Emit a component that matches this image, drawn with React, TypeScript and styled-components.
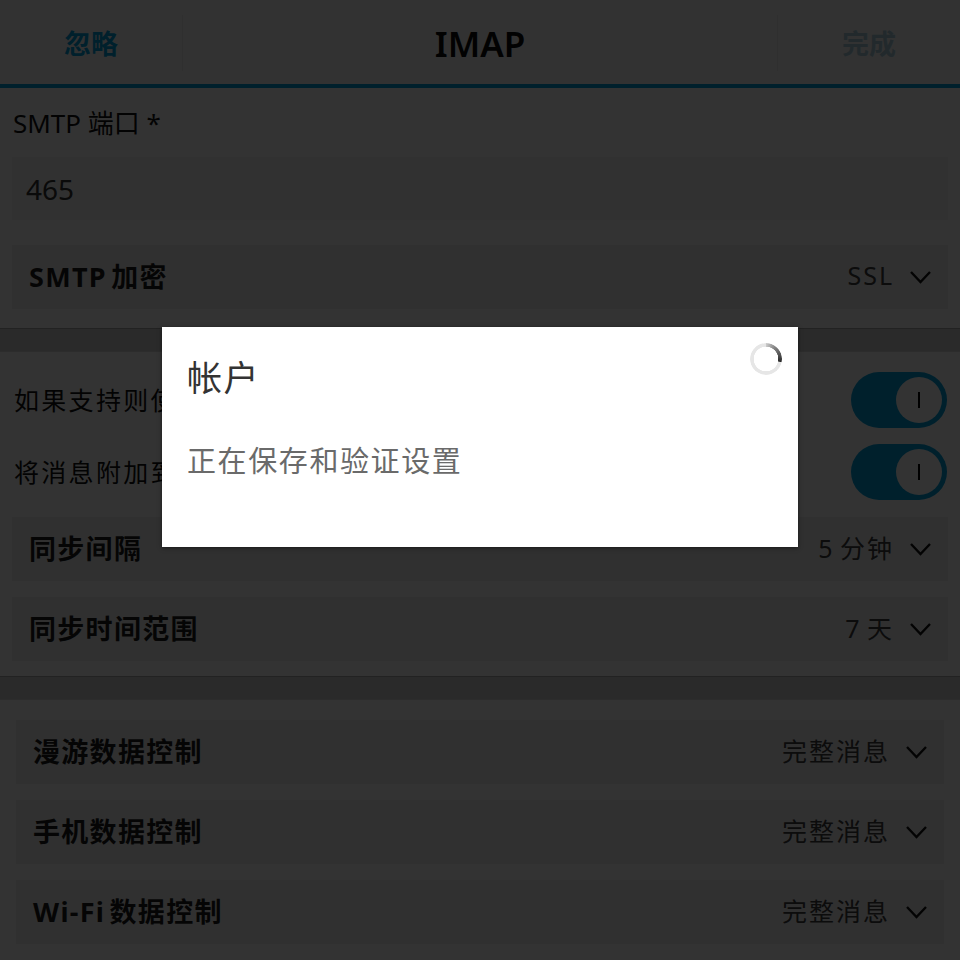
import React from 'react'
import styled, { createGlobalStyle } from 'styled-components'

const accent = '#00a0dc'

const GlobalStyle = createGlobalStyle`
  html, body {
    margin: 0;
    padding: 0;
    background: #fff;
    font-family: "Noto Sans", "Noto Sans CJK SC", sans-serif;
  }
  * { box-sizing: border-box; }
`

const Screen = styled.div`
  position: relative;
  width: 960px;
  height: 960px;
  overflow: hidden;
  background: #fff;
  color: #000;
`

const Header = styled.header`
  display: grid;
  grid-template-columns: 183px 1fr 183px;
  align-items: center;
  height: 88px;
  padding-top: 2px;
  background: #fafafa;
  border-bottom: 4px solid ${accent};
`

const HeaderButton = styled.div<{ $side: 'left' | 'right'; $muted?: boolean }>`
  display: flex;
  align-items: center;
  justify-content: center;
  height: 56px;
  padding-bottom: 2px;
  font-size: 27px;
  font-weight: 700;
  color: ${({ $muted }) => ($muted ? '#a8cedd' : accent)};
  border-${({ $side }) => ($side === 'left' ? 'right' : 'left')}: 1px solid #ececec;
`

const HeaderTitle = styled.h1`
  margin: 0;
  text-align: center;
  font-size: 35px;
  font-weight: 600;
  line-height: 1;
  color: #0a0a0a;
`

const Section = styled.section<{ $inset: number; $pt: number; $pb: number }>`
  display: flex;
  flex-direction: column;
  padding: ${({ $pt, $pb, $inset }) => `${$pt}px ${$inset}px ${$pb}px`};
`

const FieldLabel = styled.label`
  height: 51px;
  padding-left: 1px;
  font-size: 26px;
  line-height: 34px;
  color: #111;
`

const Input = styled.div`
  display: flex;
  align-items: center;
  height: 63px;
  padding-left: 14px;
  background: #f5f5f5;
  font-size: 28px;
  color: #333;
`

const SelectRow = styled.div<{ $mt: number }>`
  display: flex;
  align-items: center;
  justify-content: space-between;
  height: 64px;
  margin-top: ${({ $mt }) => $mt}px;
  padding: 0 16px 0 17px;
  background: #f0f0f0;
`

const SelectName = styled.span`
  padding-bottom: 4px;
  font-size: 27px;
  font-weight: 700;
  letter-spacing: 1.3px;
  word-spacing: -4px;
  color: #1c1c1c;
`

const SelectValue = styled.span`
  display: flex;
  align-items: center;
  gap: 15px;
`

const ValueText = styled.span`
  padding-bottom: 5px;
  font-size: 25px;
  letter-spacing: 2px;
  word-spacing: -3px;
  color: #3c3c3c;
`

const Chevron = styled.svg`
  width: 23px;
  height: 14px;
  fill: none;
  stroke: #111;
  stroke-width: 2.4;
`

const Band = styled.div`
  height: 24px;
  background: #d2d2d2;
  border-top: 1px solid #a8a8a8;
  border-bottom: 1px solid #dcdcdc;
`

const ToggleRow = styled.div`
  display: flex;
  align-items: center;
  justify-content: space-between;
  height: 72px;
  padding: 0 1px 0 2px;
`

const ToggleLabel = styled.span`
  padding-bottom: 3px;
  font-size: 25px;
  letter-spacing: 2.3px;
  color: #111;
`

const Toggle = styled.div`
  display: flex;
  align-items: center;
  justify-content: flex-end;
  width: 96px;
  height: 56px;
  padding-right: 5px;
  border-radius: 28px;
  background: ${accent};
`

const Knob = styled.div`
  display: flex;
  align-items: center;
  justify-content: center;
  width: 46px;
  height: 46px;
  border-radius: 50%;
  background: #fff;

  &::after {
    content: '';
    width: 2px;
    height: 16px;
    background: #000;
  }
`

const Backdrop = styled.div`
  position: absolute;
  inset: 0;
  display: flex;
  align-items: flex-start;
  justify-content: center;
  padding-top: 327px;
  background: rgba(0, 0, 0, 0.8);
`

const Dialog = styled.div`
  width: 636px;
  height: 220px;
  padding: 16px 16px 0 26px;
  background: #fff;
  box-shadow: 0 1px 4px rgba(0, 0, 0, 0.5);
`

const DialogHead = styled.div`
  display: flex;
  align-items: flex-start;
  justify-content: space-between;
`

const DialogTitle = styled.h2`
  margin: 11px 0 0 -1px;
  font-size: 35px;
  font-weight: 400;
  line-height: 48px;
  letter-spacing: 1.5px;
  color: #333;
`

const Spinner = styled.div`
  width: 32px;
  height: 32px;
  border-radius: 50%;
  background: conic-gradient(from 0deg, #dedede -10deg, #888 35deg, #2a2a2a 100deg, #e6e6e6 103deg, #e6e6e6 350deg);
  -webkit-mask: radial-gradient(circle, transparent 12px, #000 12.5px);
  mask: radial-gradient(circle, transparent 12px, #000 12.5px);
`

const DialogText = styled.p`
  margin: 38px 0 0 -1px;
  font-size: 29px;
  line-height: 42px;
  letter-spacing: 1.6px;
  color: #6a6a6a;
`

const ChevronDown = () => (
  <Chevron viewBox="0 0 23 14">
    <polyline points="2,2 11.5,12 21,2" />
  </Chevron>
)

const Select = ({ name, value, mt }: { name: string; value: string; mt: number }) => (
  <SelectRow $mt={mt}>
    <SelectName>{name}</SelectName>
    <SelectValue>
      <ValueText>{value}</ValueText>
      <ChevronDown />
    </SelectValue>
  </SelectRow>
)

const App: React.FC = () => (
  <>
    <GlobalStyle />
    <Screen>
      <Header>
        <HeaderButton $side="left">忽略</HeaderButton>
        <HeaderTitle>IMAP</HeaderTitle>
        <HeaderButton $side="right" $muted>完成</HeaderButton>
      </Header>

      <Section $inset={12} $pt={18} $pb={19}>
        <FieldLabel>SMTP 端口 *</FieldLabel>
        <Input>465</Input>
        <Select name="SMTP 加密" value="SSL" mt={25} />
      </Section>
      <Band />

      <Section $inset={12} $pt={12} $pb={15}>
        <ToggleRow>
          <ToggleLabel>如果支持则使</ToggleLabel>
          <Toggle><Knob /></Toggle>
        </ToggleRow>
        <ToggleRow>
          <ToggleLabel>将消息附加到</ToggleLabel>
          <Toggle><Knob /></Toggle>
        </ToggleRow>
        <Select name="同步间隔" value="5 分钟" mt={9} />
        <Select name="同步时间范围" value="7 天" mt={16} />
      </Section>
      <Band />

      <Section $inset={16} $pt={20} $pb={16}>
        <Select name="漫游数据控制" value="完整消息" mt={0} />
        <Select name="手机数据控制" value="完整消息" mt={16} />
        <Select name="Wi-Fi 数据控制" value="完整消息" mt={16} />
      </Section>

      <Backdrop>
        <Dialog>
          <DialogHead>
            <DialogTitle>帐户</DialogTitle>
            <Spinner />
          </DialogHead>
          <DialogText>正在保存和验证设置</DialogText>
        </Dialog>
      </Backdrop>
    </Screen>
  </>
)

export default App
